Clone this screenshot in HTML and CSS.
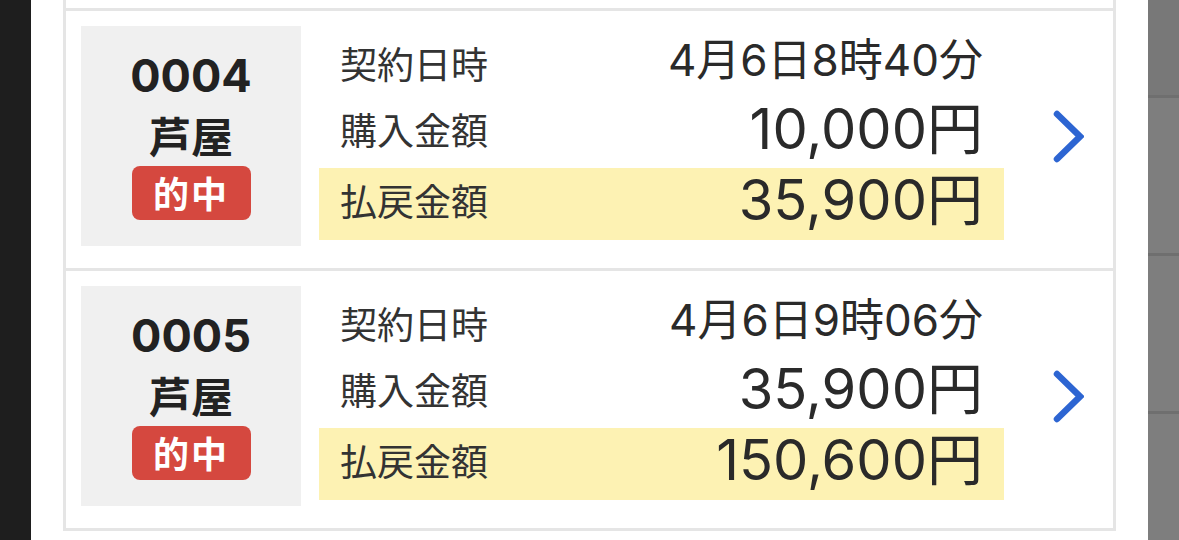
FILE: index.html
```html
<!DOCTYPE html>
<html lang="ja">
<head>
<meta charset="utf-8">
<title>購入履歴</title>
<link rel="stylesheet" href="styles.css">
</head>
<body>
<div class="screen">
  <div class="edge-left"></div>
  <div class="panel">
    <div class="list">
      <div class="prev"></div>

      <div class="card">
        <div class="id-box">
          <div class="id-no">0004</div>
          <div class="id-place">芦屋</div>
          <div class="badge">的中</div>
        </div>
        <div class="info">
          <div class="row row-date">
            <span class="label">契約日時</span>
            <span class="value date">4月6日8時40分</span>
          </div>
          <div class="row row-buy">
            <span class="label">購入金額</span>
            <span class="value amount">10,000円</span>
          </div>
          <div class="row row-pay">
            <span class="label">払戻金額</span>
            <span class="value amount">35,900円</span>
          </div>
        </div>
        <div class="chev">
          <svg viewBox="0 0 31 53" width="31" height="53"><path d="M4 4 L27 26.5 L4 49" fill="none" stroke="#2d65d2" stroke-width="6.5" stroke-linecap="round" stroke-linejoin="miter"/></svg>
        </div>
      </div>

      <div class="card">
        <div class="id-box">
          <div class="id-no">0005</div>
          <div class="id-place">芦屋</div>
          <div class="badge">的中</div>
        </div>
        <div class="info">
          <div class="row row-date">
            <span class="label">契約日時</span>
            <span class="value date">4月6日9時06分</span>
          </div>
          <div class="row row-buy">
            <span class="label">購入金額</span>
            <span class="value amount">35,900円</span>
          </div>
          <div class="row row-pay">
            <span class="label">払戻金額</span>
            <span class="value amount">150,600円</span>
          </div>
        </div>
        <div class="chev">
          <svg viewBox="0 0 31 53" width="31" height="53"><path d="M4 4 L27 26.5 L4 49" fill="none" stroke="#2d65d2" stroke-width="6.5" stroke-linecap="round" stroke-linejoin="miter"/></svg>
        </div>
      </div>
    </div>
  </div>
  <div class="edge-right">
    <div class="seg seg-1"></div>
    <div class="seg seg-2"></div>
    <div class="seg seg-3"></div>
    <div class="seg seg-4"></div>
  </div>
</div>
</body>
</html>
```

FILE: styles.css
```css
html, body {
  margin: 0;
  padding: 0;
  background: #1e1e1e;
}

body {
  font-family: "Noto Sans CJK JP", "Noto Sans", sans-serif;
  color: #333333;
}

.screen {
  display: flex;
  width: 1179px;
  height: 540px;
  overflow: hidden;
}

.edge-left {
  width: 31px;
  flex: none;
  background: #1e1e1e;
}

.panel {
  flex: 1;
  background: #ffffff;
  padding: 0 32px;
}

.list {
  border-left: 3px solid #e5e5e5;
  border-right: 3px solid #e5e5e5;
}

.prev {
  height: 8px;
  border-bottom: 3px solid #e5e5e5;
}

.card {
  display: flex;
  padding: 15px 0 22px 15px;
  border-bottom: 3px solid #e5e5e5;
}

.id-box {
  width: 220px;
  height: 220px;
  flex: none;
  background: #f0f0f0;
  display: flex;
  flex-direction: column;
  align-items: center;
  padding-top: 25px;
  box-sizing: border-box;
}

.id-no {
  font-family: "Inter", "Noto Sans CJK JP", sans-serif;
  font-size: 45px;
  font-weight: 700;
  line-height: 50px;
  color: #222222;
}

.id-place {
  margin-top: 10px;
  font-size: 42px;
  font-weight: 700;
  line-height: 48px;
  color: #222222;
}

.badge {
  margin-top: 7px;
  width: 119px;
  height: 54px;
  border-radius: 8px;
  background: #d5483f;
  color: #ffffff;
  font-size: 36px;
  font-weight: 700;
  line-height: 52px;
  text-align: center;
  letter-spacing: 2px;
}

.info {
  width: 685px;
  flex: none;
  margin-left: 18px;
  display: flex;
  flex-direction: column;
}

.row {
  display: flex;
  justify-content: space-between;
  align-items: center;
  padding: 0 21px;
}

.row-date {
  height: 74px;
}

.row-buy {
  height: 58px;
  margin-bottom: 10px;
}

.row-pay {
  height: 72px;
  box-sizing: border-box;
  padding-bottom: 8px;
  background: #fdf2b3;
}

.label {
  font-size: 37px;
  line-height: 40px;
  color: #333333;
}

.value {
  font-family: "Inter", "Noto Sans CJK JP", sans-serif;
  font-weight: 400;
  color: #2a2a2a;
}

.date {
  font-size: 44px;
  line-height: 46px;
  margin-top: -6px;
}

.amount {
  font-size: 56px;
  line-height: 58px;
}

.chev {
  margin-left: 49px;
  display: flex;
  align-items: center;
}

.chev svg {
  display: block;
}

.edge-right {
  width: 31px;
  flex: none;
  display: flex;
  flex-direction: column;
  background: #7e7e7e;
}

.seg {
  border-bottom: 3px solid #6f6f6f;
  background: #7e7e7e;
}

.seg-1 {
  height: 95px;
  background: #787878;
}

.seg-2 {
  height: 155px;
}

.seg-3 {
  height: 155px;
}

.seg-4 {
  flex: 1;
  border-bottom: none;
}
```
